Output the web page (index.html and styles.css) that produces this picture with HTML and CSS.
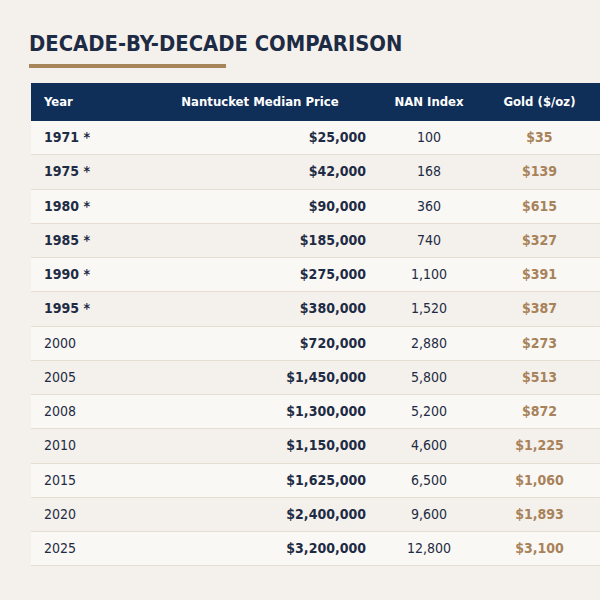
FILE: index.html
```html
<!DOCTYPE html>
<html>
<head>
<meta charset="utf-8">
<link rel="stylesheet" href="styles.css">
</head>
<body>
<main class="page">
  <h1 class="title">DECADE-BY-DECADE COMPARISON</h1>
  <div class="rule"></div>
  <table class="cmp">
    <thead>
      <tr>
        <th class="c-year">Year</th>
        <th class="c-price">Nantucket Median Price</th>
        <th class="c-nan">NAN Index</th>
        <th class="c-gold">Gold ($/oz)</th>
      </tr>
    </thead>
    <tbody>
      <tr><td class="c-year est">1971 *</td><td class="c-price">$25,000</td><td class="c-nan">100</td><td class="c-gold">$35</td></tr>
      <tr><td class="c-year est">1975 *</td><td class="c-price">$42,000</td><td class="c-nan">168</td><td class="c-gold">$139</td></tr>
      <tr><td class="c-year est">1980 *</td><td class="c-price">$90,000</td><td class="c-nan">360</td><td class="c-gold">$615</td></tr>
      <tr><td class="c-year est">1985 *</td><td class="c-price">$185,000</td><td class="c-nan">740</td><td class="c-gold">$327</td></tr>
      <tr><td class="c-year est">1990 *</td><td class="c-price">$275,000</td><td class="c-nan">1,100</td><td class="c-gold">$391</td></tr>
      <tr><td class="c-year est">1995 *</td><td class="c-price">$380,000</td><td class="c-nan">1,520</td><td class="c-gold">$387</td></tr>
      <tr><td class="c-year">2000</td><td class="c-price">$720,000</td><td class="c-nan">2,880</td><td class="c-gold">$273</td></tr>
      <tr><td class="c-year">2005</td><td class="c-price">$1,450,000</td><td class="c-nan">5,800</td><td class="c-gold">$513</td></tr>
      <tr><td class="c-year">2008</td><td class="c-price">$1,300,000</td><td class="c-nan">5,200</td><td class="c-gold">$872</td></tr>
      <tr><td class="c-year">2010</td><td class="c-price">$1,150,000</td><td class="c-nan">4,600</td><td class="c-gold">$1,225</td></tr>
      <tr><td class="c-year">2015</td><td class="c-price">$1,625,000</td><td class="c-nan">6,500</td><td class="c-gold">$1,060</td></tr>
      <tr><td class="c-year">2020</td><td class="c-price">$2,400,000</td><td class="c-nan">9,600</td><td class="c-gold">$1,893</td></tr>
      <tr><td class="c-year">2025</td><td class="c-price">$3,200,000</td><td class="c-nan">12,800</td><td class="c-gold">$3,100</td></tr>
    </tbody>
  </table>
</main>
</body>
</html>
```

FILE: styles.css
```css
html, body {
  margin: 0;
  padding: 0;
  background: #f4f1ec;
}
body {
  font-family: "DejaVu Sans Condensed", "DejaVu Sans", sans-serif;
  font-stretch: condensed;
  color: #1e2b44;
  overflow: hidden;
}
.page {
  padding: 31px 0 0 29px;
}
.title {
  margin: 0;
  font-size: 21.8px;
  line-height: 26px;
  font-weight: bold;
  color: #1e2b44;
}
.rule {
  width: 197px;
  height: 4px;
  background: #a8845a;
  margin-top: 7px;
}
.cmp {
  margin: 15px 0 0 2px;
  width: 569px;
  border-collapse: collapse;
  table-layout: fixed;
  font-size: 14px;
}
.cmp th {
  background: #0f2e58;
  color: #ffffff;
  font-size: 13px;
  font-weight: bold;
  line-height: 16px;
  padding: 11px 13px;
  text-align: center;
  white-space: nowrap;
}
.cmp th.c-year { text-align: left; }
.cmp td {
  line-height: 17.25px;
  padding: 8px 13px;
  border-bottom: 1px solid #e6ded2;
  color: #1e2b44;
  white-space: nowrap;
}
.cmp tbody tr:nth-child(odd) td { background: #faf8f5; }
.cmp tbody tr:nth-child(even) td { background: #f4f1ec; }
.c-year { width: 84px; text-align: left; }
.c-price { width: 212px; text-align: right; }
.c-nan { width: 74px; text-align: center; }
.c-gold { text-align: center; }
td.est { font-weight: bold; }
td.c-price { font-weight: bold; }
td.c-gold { font-weight: bold; color: #a8825a; }
```
